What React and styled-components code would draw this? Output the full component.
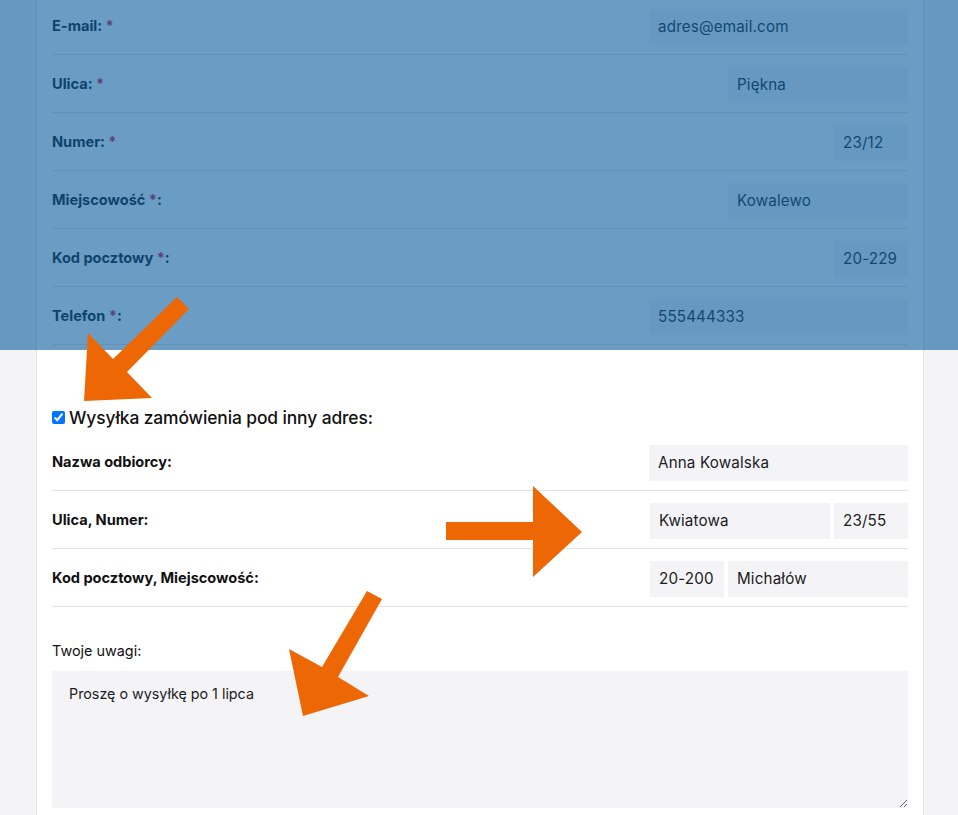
import React from 'react';
import styled, { createGlobalStyle } from 'styled-components';

const GlobalStyle = createGlobalStyle`
  html, body {
    margin: 0;
    padding: 0;
    height: 815px;
    overflow: hidden;
    background: #f4f4f6;
    font-family: Inter, "Open Sans", sans-serif;
    color: #111;
  }
`;

const Page = styled.div`
  position: relative;
  width: 958px;
  height: 815px;
  overflow: hidden;
`;

const Card = styled.div`
  margin: -3px 0 0 36px;
  width: 856px;
  padding: 0 15px 40px;
  background: #fff;
  border-left: 1px solid #e3e3e7;
  border-right: 1px solid #e3e3e7;
`;

const Row = styled.div`
  display: flex;
  align-items: center;
  justify-content: space-between;
  padding: 12px 0 9px;
  border-bottom: 1px solid #e2e2e4;
`;

const Label = styled.span`
  margin-bottom: 2px;
  font-size: 14.6px;
  font-weight: 700;
  letter-spacing: -0.02px;
`;

const Star = styled.span`
  color: #d0103a;
`;

const Fields = styled.div`
  display: flex;
  gap: 4px;
`;

const Input = styled.input`
  box-sizing: border-box;
  width: ${(p) => p.$w}px;
  height: 36px;
  padding: 0 9px 2px;
  border: none;
  outline: none;
  background: #f4f4f6;
  font-family: inherit;
  font-size: 15.2px;
  letter-spacing: 0.15px;
  color: #1c1c24;
`;

const CheckHeading = styled.label`
  display: flex;
  align-items: center;
  margin: 60px 0 4px;
  height: 24px;
  font-size: 17.4px;
  font-weight: 500;
  letter-spacing: -0.1px;
`;

const Check = styled.input`
  width: 13px;
  height: 13px;
  margin: 0 4px 0 0;
`;

const NotesLabel = styled.label`
  display: block;
  padding-top: 33px;
  margin-bottom: 10px;
  line-height: 21px;
  font-size: 14.4px;
`;

const Notes = styled.textarea`
  display: block;
  box-sizing: border-box;
  width: 856px;
  height: 137px;
  padding: 12px 17px;
  border: none;
  outline: none;
  background: #f4f4f6;
  font-family: inherit;
  font-size: 14.3px;
  line-height: 21px;
  color: #1c1c24;
`;

const Shade = styled.div`
  position: absolute;
  top: 0;
  left: 0;
  width: 958px;
  height: 350px;
  background: rgba(15, 95, 159, 0.62);
  pointer-events: none;
`;

const Arrows = styled.svg`
  position: absolute;
  top: 0;
  left: 0;
  pointer-events: none;
`;

const mainFields = [
  { label: 'E-mail:', star: 'before', value: 'adres@email.com', w: 259 },
  { label: 'Ulica:', star: 'before', value: 'Piękna', w: 180 },
  { label: 'Numer:', star: 'before', value: '23/12', w: 74 },
  { label: 'Miejscowość', star: 'after', value: 'Kowalewo', w: 180 },
  { label: 'Kod pocztowy', star: 'after', value: '20-229', w: 74 },
  { label: 'Telefon', star: 'after', value: '555444333', w: 259 },
];

const shipFields = [
  { label: 'Nazwa odbiorcy:', inputs: [{ value: 'Anna Kowalska', w: 259 }] },
  {
    label: 'Ulica, Numer:',
    inputs: [
      { value: 'Kwiatowa', w: 180 },
      { value: '23/55', w: 74 },
    ],
  },
  {
    label: 'Kod pocztowy, Miejscowość:',
    inputs: [
      { value: '20-200', w: 74 },
      { value: 'Michałów', w: 180 },
    ],
  },
];

const ORANGE = '#ed6804';

const App = () => {
  return (
    <Page>
      <GlobalStyle />
      <Card>
        {mainFields.map((f) => (
          <Row key={f.label}>
            <Label>
              {f.star === 'before' ? (
                <>
                  {f.label} <Star>*</Star>
                </>
              ) : (
                <>
                  {f.label} <Star>*</Star>:
                </>
              )}
            </Label>
            <Input $w={f.w} defaultValue={f.value} />
          </Row>
        ))}

        <CheckHeading>
          <Check type="checkbox" defaultChecked />
          Wysyłka zamówienia pod inny adres:
        </CheckHeading>

        {shipFields.map((f) => (
          <Row key={f.label}>
            <Label>{f.label}</Label>
            <Fields>
              {f.inputs.map((i) => (
                <Input key={i.value} $w={i.w} defaultValue={i.value} />
              ))}
            </Fields>
          </Row>
        ))}

        <NotesLabel>Twoje uwagi:</NotesLabel>
        <Notes defaultValue="Proszę o wysyłkę po 1 lipca" />
      </Card>

      <Shade />

      <Arrows width="958" height="815" viewBox="0 0 958 815">
        <polygon
          fill={ORANGE}
          points="177,297 189,309 127,372 152,398 84,401 88,333 113,359"
        />
        <polygon
          fill={ORANGE}
          points="446,522 533,522 533,486 582,532 533,577 533,540 446,540"
        />
        <polygon
          fill={ORANGE}
          points="367,591 382,599 338,677 369,696 303,716 289,649 322,667"
        />
      </Arrows>
    </Page>
  );
};

export default App;
